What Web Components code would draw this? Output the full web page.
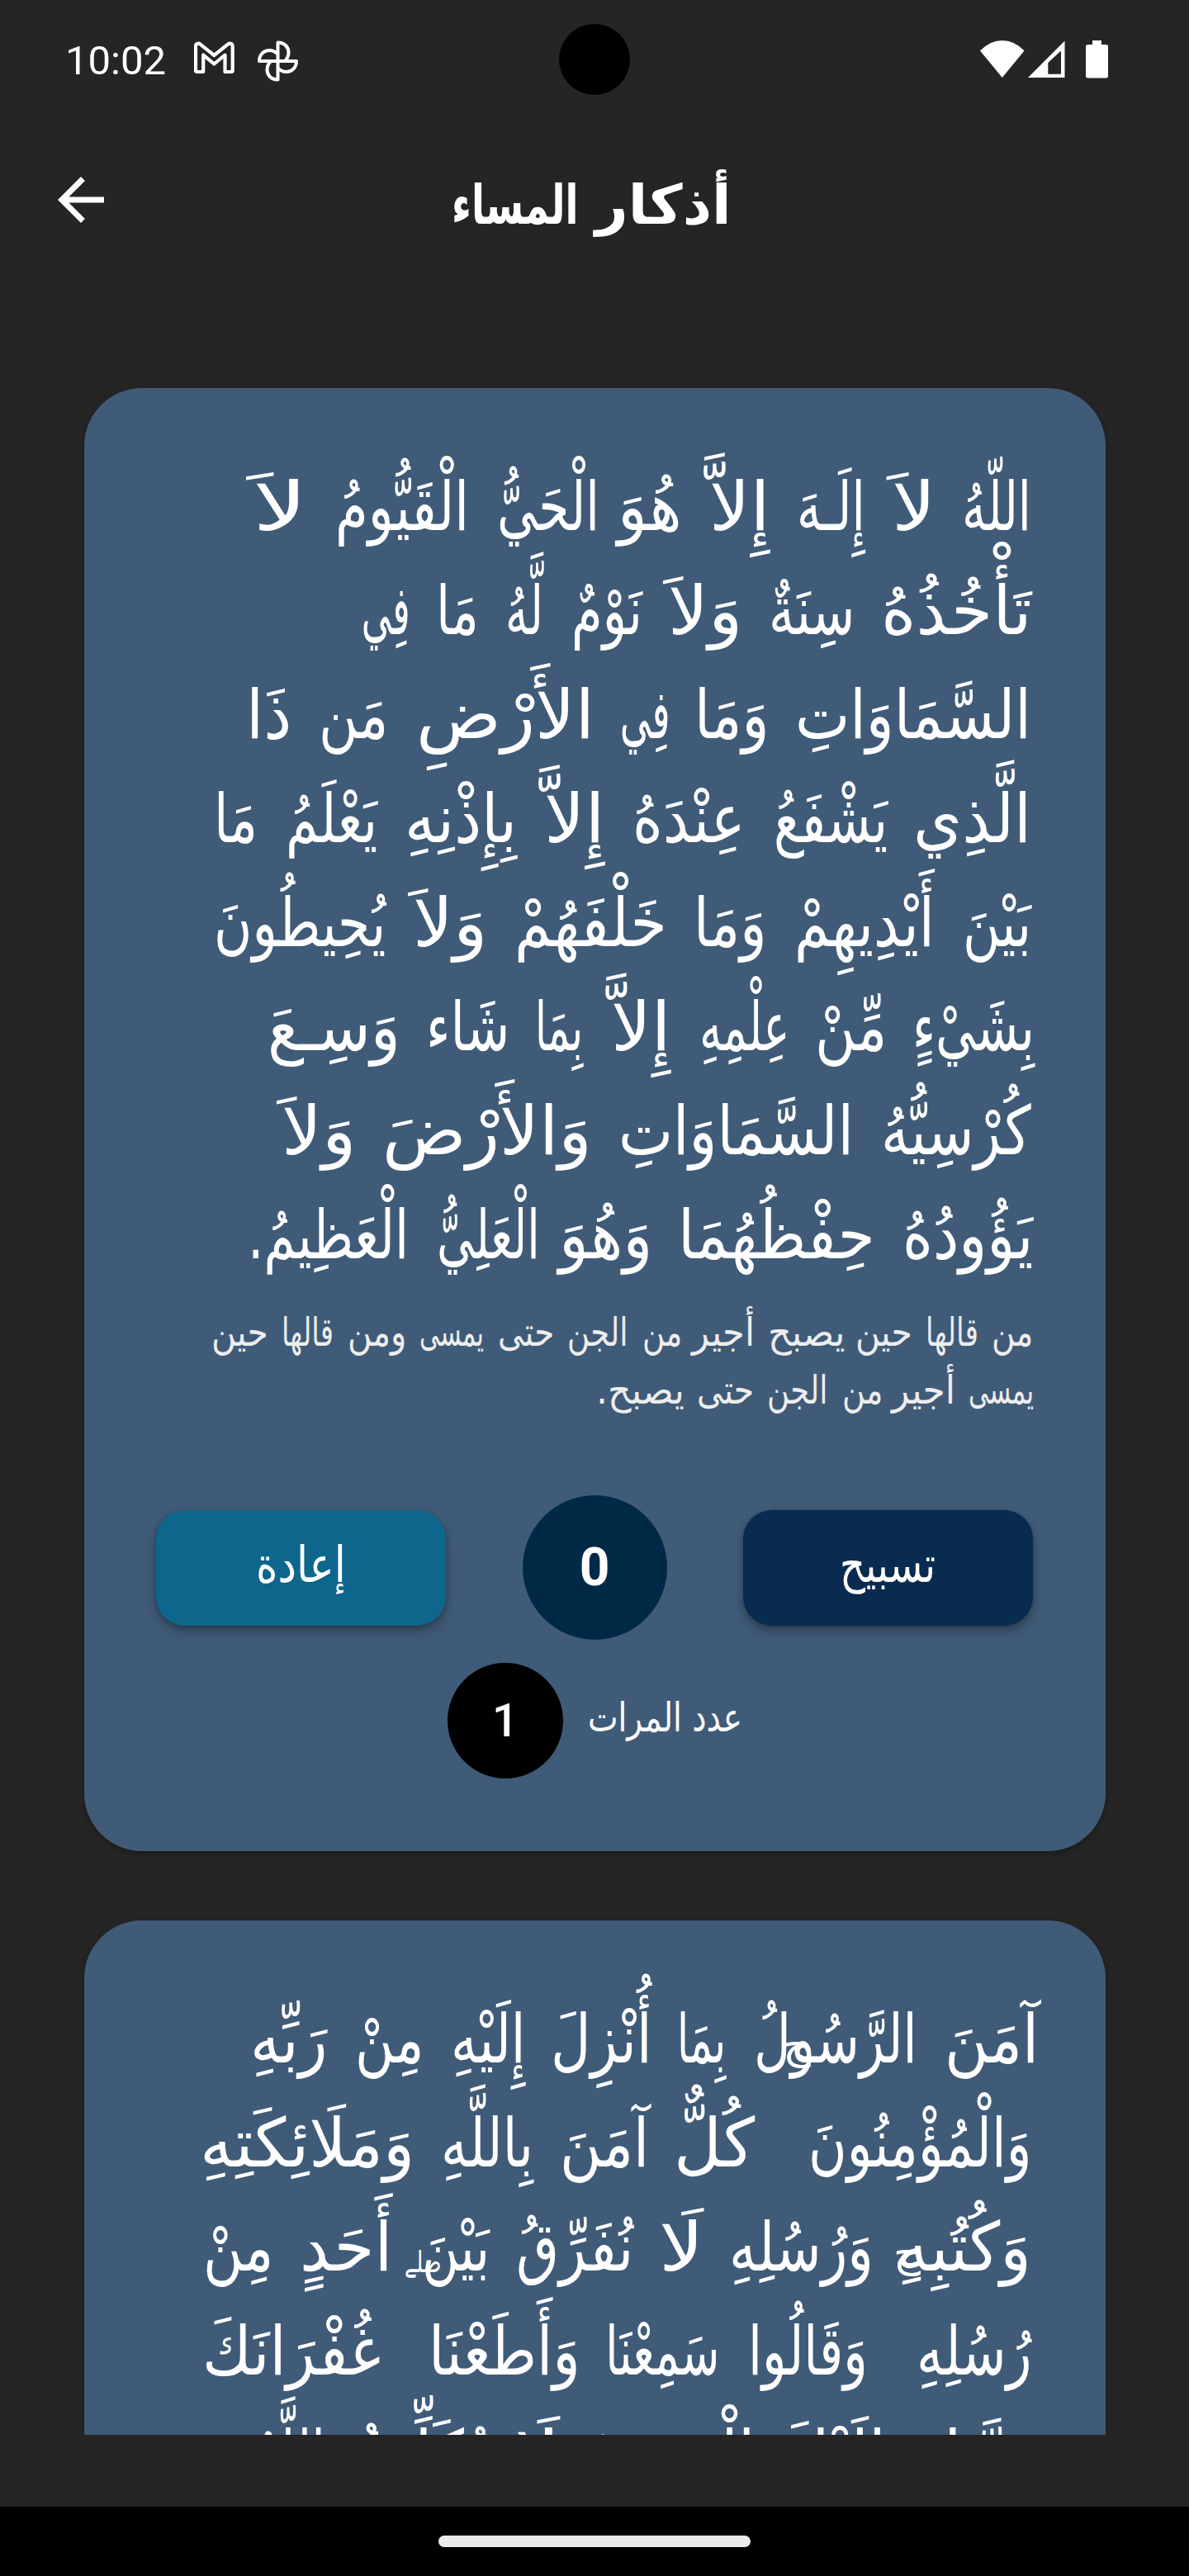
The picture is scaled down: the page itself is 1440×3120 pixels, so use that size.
<!DOCTYPE html>
<html lang="ar">
<head>
<meta charset="utf-8">
<title>أذكار المساء</title>
<style>
html,body{margin:0;padding:0;background:#252525}
body{width:1440px;height:3120px;overflow:hidden}
</style>
</head>
<body>
<azkar-app></azkar-app>
<script>
const define = (name, html, ready) => customElements.define(name, class extends HTMLElement {
  connectedCallback() {
    if (this.shadowRoot) return;
    this.attachShadow({mode: 'open'}).innerHTML = html;
    if (ready) ready(this, this.shadowRoot);
  }
});

/* One run of text, condensed or stretched to the width in its "w" attribute. */
define('fit-line', `<style>
:host{display:flex;direction:rtl;justify-content:flex-start;white-space:pre}
span{flex:none;display:block;transform-origin:100% 50%}
</style><span><slot></slot></span>`, (el, root) => {
  const s = root.querySelector('span'), w = +el.getAttribute('w');
  el.style.width = w + 'px';
  s.style.transform = 'scaleX(' + w / s.offsetWidth + ')';
});

/* A line set word by word. The words are in "text"; "m" lists, for each word,
   its right and left edge measured leftwards from the line's right edge. */
define('word-line', `<style>
:host{display:flex;direction:rtl;justify-content:flex-start;white-space:pre;position:relative}
.w{flex:none;display:block}
.w span{display:inline-block;transform-origin:100% 50%}
</style><slot></slot>`, (el, root) => {
  const words = el.getAttribute('text').split(' ');
  const m = el.getAttribute('m').split(',').map(Number);
  const pad = +(el.getAttribute('pad') || 3);
  let at = 0;
  words.forEach((t, i) => {
    const r = m[i * 2] - pad, l = m[i * 2 + 1] + pad;
    const box = document.createElement('div');
    box.className = 'w';
    const s = document.createElement('span');
    s.textContent = t;
    box.append(s);
    root.append(box, ' ');
    const w = l - r;
    box.style.width = w + 'px';
    box.style.marginRight = (r - at) + 'px';
    s.style.transform = 'scaleX(' + w / s.offsetWidth + ')';
    at = l;
  });
});

/* Small Quranic pause sign placed over a line. */
define('pause-sign', `<style>
:host{position:absolute;display:block;font-size:var(--s);line-height:50px}
</style><slot></slot>`);

define('status-bar', `<style>
:host{display:flex;height:144px;box-sizing:border-box;padding:0 98px 0 79px;align-items:center;color:#fff;position:relative}
.t{font:400 49px/60px Roboto,sans-serif;width:156px;padding-top:3px}
.g{flex:1}
svg{display:block;fill:#fff;flex:none}
.cam{position:absolute;left:677px;top:29px;width:86px;height:86px;border-radius:50%;background:#000}
</style>
<div class="t">10:02</div>
<svg width="49" height="50" viewBox="0 0 49 50"><path d="M2 38.500V9.500Q2 5.500 5.500 5.500L7 6.200 24.300 20 41.600 6.200 43.200 5.500Q46.700 5.500 46.700 9.500V38.500Q46.700 40 45 40H37.500V19.500L24.300 30.500 11.200 19.500V40H3.500Q2 40 2 38.500Z" fill="none" stroke="#fff" stroke-width="4.200" stroke-linejoin="round"/></svg>
<svg width="49" height="50" viewBox="0 0 49 50" style="margin-left:28px;margin-top:3px"><g fill="none" stroke="#fff" stroke-width="4" stroke-linejoin="round"><path d="M24.500 25V2.500C33 2.500 37.500 8.500 37.500 14.500 37.500 19 35.500 22.500 33 25"/><path d="M24.500 25V2.500C33 2.500 37.500 8.500 37.500 14.500 37.500 19 35.500 22.500 33 25" transform="rotate(90 24.500 25)"/><path d="M24.500 25V2.500C33 2.500 37.500 8.500 37.500 14.500 37.500 19 35.500 22.500 33 25" transform="rotate(180 24.500 25)"/><path d="M24.500 25V2.500C33 2.500 37.500 8.500 37.500 14.500 37.500 19 35.500 22.500 33 25" transform="rotate(270 24.500 25)"/></g></svg>
<div class="g"></div>
<svg width="54" height="46" viewBox="0 0 54 46"><path d="M0 12.500Q12 0 26.800 0T53.500 12.500L26.800 45Z"/></svg>
<svg width="45" height="46" viewBox="0 0 45 46" style="margin-left:4px"><path fill-rule="evenodd" d="M0 45 44.500 0.500V45ZM24.300 27V40.800H40V12.500Z"/></svg>
<svg width="27" height="46" viewBox="0 0 27 46" style="margin-left:25px"><path d="M8 0H19V5H24.500Q27 5 27 7.500V43Q27 45.500 24.500 45.500H2.500Q0 45.500 0 43V7.500Q0 5 2.500 5H8Z"/></svg>
<div class="cam"></div>`);

define('app-bar', `<style>
:host{display:grid;grid-template-columns:84px 1fr 84px;height:196px;padding:0 56px;align-items:start;color:#fff}
svg{display:block;fill:#fff;margin-top:56px}
.c{display:flex;justify-content:center}
word-line{width:333px;margin:53px 7px 0 0;font:700 66px/104px "DejaVu Sans",sans-serif}
</style>
<svg width="84" height="84" viewBox="0 0 24 24"><path d="M20 11H7.830l5.590-5.590L12 4l-8 8 8 8 1.410-1.410L7.830 13H20v-2z"/></svg>
<div class="c"><word-line text="أذكار المساء" m="0,159,186,333"></word-line></div>`);

define('zikr-card', `<style>
:host{display:block;box-sizing:border-box;width:1237px;height:1772px;flex:none;border-radius:70px;background:#405b78;padding:81px 90px 0 87px;box-shadow:0 3px 7px rgba(0,0,0,.3);color:#fff}
.text{display:flex;flex-direction:column;padding-right:3px;font:400 82px/126px "DejaVu Sans",sans-serif}
.note{display:flex;flex-direction:column;padding-right:3px;margin-top:19px;font:400 48px/70px "DejaVu Sans",sans-serif;color:#ededed}
</style>
<div class="text"><slot></slot></div>
<div class="note"><slot name="note"></slot></div>
<slot name="controls"></slot>`);

define('zikr-button', `<style>
:host{display:flex;width:351px;height:140px;border-radius:35px;align-items:center;justify-content:center;background:var(--fill);box-shadow:0 7px 14px rgba(0,0,0,.28),0 1px 5px rgba(0,0,0,.2);font:400 60px/80px "DejaVu Sans",sans-serif}
fit-line{margin-top:-8px}
</style><slot></slot>`);

define('count-disc', `<style>
:host{display:flex;border-radius:50%;align-items:center;justify-content:center;font-family:Roboto,sans-serif}
:host([kind=done]){width:175px;height:175px;background:#002947;font-size:64px;font-weight:700}
:host([kind=goal]){width:140px;height:140px;background:#000;font-size:56px;font-weight:500}
b{font-weight:inherit;line-height:1}
</style><b><slot></slot></b>`);

define('zikr-controls', `<style>
:host{display:flex;flex-direction:column;margin-top:93px}
.r{display:flex;justify-content:space-between;align-items:center;height:175px;margin-right:-2px}
.r fit-line{margin-top:-8px}
.n{display:flex;justify-content:center;align-items:center;gap:30px;margin:28px -3px 0 0;height:140px}
.n fit-line{font:500 49px/70px "DejaVu Sans",sans-serif;margin-top:-6px}
</style>
<div class="r">
<zikr-button style="--fill:#0f668c"><fit-line w="109">إعادة</fit-line></zikr-button>
<count-disc kind="done">0</count-disc>
<zikr-button style="--fill:#082b4f"><fit-line w="116">تسبيح</fit-line></zikr-button>
</div>
<div class="n"><count-disc kind="goal">1</count-disc><fit-line w="187">عدد المرات</fit-line></div>`);

define('nav-bar', `<style>
:host{display:flex;height:84px;background:#000;align-items:center;justify-content:center}
i{display:block;width:378px;height:14px;border-radius:7px;background:#ebebeb}
</style><i></i>`);

define('azkar-app', `<style>
:host{display:flex;flex-direction:column;width:1440px;height:3120px;background:#252525}
.list{height:2609px;box-sizing:border-box;margin-bottom:87px;padding:130px 0 0 102px;display:flex;flex-direction:column;gap:84px;overflow:hidden}
</style>
<status-bar></status-bar>
<app-bar></app-bar>
<div class="list">
<zikr-card>
<word-line text="اللّهُ لاَ إِلَـهَ إِلاَّ هُوَ الْحَيُّ الْقَيُّومُ لاَ" m="0,78,115,163,201,278,316,384,423,495,523,641,681,837,876,937"></word-line>
<word-line text="تَأْخُذُهُ سِنَةٌ وَلاَ نَوْمٌ لَّهُ مَا فِي" m="0,177,214,312,350,434,471,551,591,631,669,715,752,805"></word-line>
<word-line text="السَّمَاوَاتِ وَمَا فِي الأَرْضِ مَن ذَا" m="0,280,317,402,437,492,529,739,779,857,896,945"></word-line>
<word-line text="الَّذِي يَشْفَعُ عِنْدَهُ إِلاَّ بِإِذْنِهِ يَعْلَمُ مَا" m="0,137,174,306,346,477,516,584,623,753,792,897,937,984"></word-line>
<word-line text="بَيْنَ أَيْدِيهِمْ وَمَا خَلْفَهُمْ وَلاَ يُحِيطُونَ" m="0,77,117,281,320,403,441,620,659,743,782,984"></word-line>
<word-line text="بِشَيْءٍ مِّنْ عِلْمِهِ إِلاَّ بِمَا شَاء وَسِـعَ" m="-4,138,175,256,293,396,436,503,543,595,632,727,764,919"></word-line>
<word-line text="كُرْسِيُّهُ السَّمَاوَاتِ وَالأَرْضَ وَلاَ" m="0,176,215,494,532,780,818,902"></word-line>
<word-line text="يَؤُودُهُ حِفْظُهُمَا وَهُوَ الْعَلِيُّ الْعَظِيمُ." m="-2,150,189,422,459,566,595,714,754,943"></word-line>
<word-line slot="note" pad="2" text="من قالها حين يصبح أجير من الجن حتى يمسى ومن قالها حين" m="-3,43,63,123,143,208,225,314,334,406,422,466,488,557,577,641,662,736,756,823,844,903,923,988"></word-line>
<word-line slot="note" pad="2" text="يمسى أجير من الجن حتى يصبح." m="-4,71,91,164,179,224,246,315,335,400,419,522"></word-line>
<zikr-controls slot="controls"></zikr-controls>
</zikr-card>
<zikr-card>
<word-line text="آمَنَ الرَّسُولُ بِمَا أُنْزِلَ إِلَيْهِ مِنْ رَبِّهِ" m="-9,99,138,330,370,423,460,576,613,697,736,813,853,940"><pause-sign style="--s:48px;right:264px;top:44px"><fit-line w="34">ج</fit-line></pause-sign></word-line>
<word-line text="وَالْمُؤْمِنُونَ كُلٌّ آمَنَ بِاللَّهِ وَمَلَائِكَتِهِ" m="0,264,335,427,463,565,603,709,747,1001"></word-line>
<word-line text="وَكُتُبِهِ وَرُسُلِهِ لَا نُفَرِّقُ بَيْنَ أَحَدٍ مِنْ" m="0,158,191,360,396,445,482,618,656,732,773,880,918,997"><pause-sign style="--s:48px;right:131px;top:44px"><fit-line w="33">ج</fit-line></pause-sign><pause-sign style="--s:36px;right:712px;top:56px"><fit-line w="45">صلے</fit-line></pause-sign></word-line>
<word-line text="رُسُلِهِ وَقَالُوا سَمِعْنَا وَأَطَعْنَا غُفْرَانَكَ" m="0,133,198,337,378,510,546,724,788,998"></word-line>
<word-line text="رَبَّنَا وَإِلَيْكَ الْمَصِيرُ لَا يُكَلِّفُ اللَّهُ" m="0,100,140,300,335,540,570,620,660,822,855,936"></word-line>
</zikr-card>
</div>
<nav-bar></nav-bar>`);
</script>
</body>
</html>
